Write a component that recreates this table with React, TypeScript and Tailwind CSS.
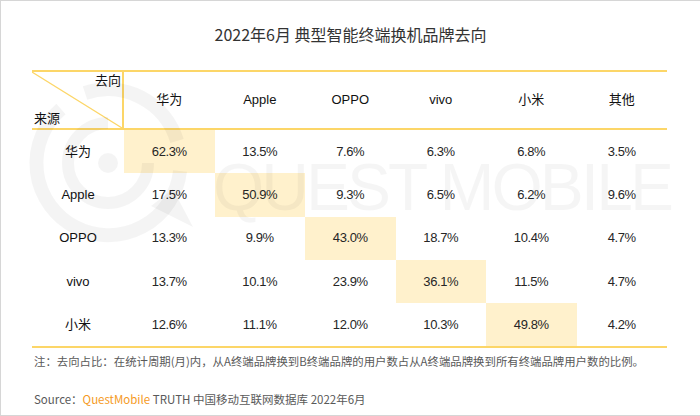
import React from "react";

const cols = ["华为", "Apple", "OPPO", "vivo", "小米", "其他"];
const rows: { name: string; vals: string[] }[] = [
  { name: "华为", vals: ["62.3%", "13.5%", "7.6%", "6.3%", "6.8%", "3.5%"] },
  { name: "Apple", vals: ["17.5%", "50.9%", "9.3%", "6.5%", "6.2%", "9.6%"] },
  { name: "OPPO", vals: ["13.3%", "9.9%", "43.0%", "18.7%", "10.4%", "4.7%"] },
  { name: "vivo", vals: ["13.7%", "10.1%", "23.9%", "36.1%", "11.5%", "4.7%"] },
  { name: "小米", vals: ["12.6%", "11.1%", "12.0%", "10.3%", "49.8%", "4.2%"] },
];

function Watermark() {
  return (
    <div className="absolute inset-0 pointer-events-none">
      <svg width="700" height="416" className="absolute left-0 top-0">
        <g fill="none" stroke="rgba(0,0,0,0.045)" strokeLinecap="butt">
          <path d="M 60 108 A 72 72 0 1 0 179 170" strokeWidth="14" />
          <path d="M 84 92 A 72 72 0 0 1 176 140" strokeWidth="14" />
          <path d="M 107 122 A 40 40 0 1 0 147 162" strokeWidth="12" />
        </g>
        <path d="M 150 205 L 192 226 L 172 188 Z" fill="rgba(0,0,0,0.045)" />
        <circle cx="107" cy="162" r="10" fill="rgba(0,0,0,0.045)" />
      </svg>
      <div
        className="absolute left-[212px] top-[153px] text-[66px] leading-none tracking-[-3px] text-[rgba(0,0,0,0.04)] whitespace-nowrap"
        style={{ fontFamily: "'Liberation Sans', Arial, sans-serif" }}
      >
        QUEST MOBILE
      </div>
    </div>
  );
}

export default function App() {
  return (
    <div
      className="relative w-[700px] h-[416px] bg-white border-t border-l border-b border-[#d6d6d6] overflow-hidden"
      style={{ fontFamily: "'Liberation Sans', 'Noto Sans CJK SC', sans-serif" }}
    >
      <div className="h-[69px] flex items-center justify-center">
        <div
          className="text-[16px] text-[#333333] pb-[4px]"
          style={{ fontFamily: "'Noto Sans CJK SC', sans-serif" }}
        >
          2022年6月 典型智能终端换机品牌去向
        </div>
      </div>

      <div className="ml-[31px] w-[635px]">
        <div className="grid grid-cols-[92px_repeat(6,1fr)] h-[60px] border-t-2 border-b-2 border-[#fcd668]">
          <div className="relative border-r-2 border-[#fcd668]">
            <svg className="absolute inset-0" width="100%" height="100%" preserveAspectRatio="none" viewBox="0 0 100 100">
              <line x1="0" y1="0" x2="100" y2="100" stroke="#fcd668" strokeWidth="1.2" vectorEffect="non-scaling-stroke" />
            </svg>
            <div className="absolute right-[1px] top-[0px] text-[13px] leading-[18px] text-[#111]">去向</div>
            <div className="absolute left-[2px] bottom-[0px] text-[13px] leading-[18px] text-[#111]">来源</div>
          </div>
          {cols.map((c) => (
            <div key={c} className="flex items-center justify-center text-[13px] text-[#111]">
              {c}
            </div>
          ))}
        </div>
        <div className="border-b-2 border-[#fcd668]">
          {rows.map((r, ri) => (
            <div key={r.name} className="grid grid-cols-[92px_repeat(6,1fr)] h-[43.3px]">
              <div className="flex items-center justify-center text-[13px] text-[#111]">{r.name}</div>
              {r.vals.map((v, ci) => (
                <div
                  key={ci}
                  className={
                    "flex items-center justify-center text-[13px] tracking-[-0.4px] text-[#262626] " +
                    (ri === ci ? "bg-[#fff1cc]" : "")
                  }
                >
                  {v}
                </div>
              ))}
            </div>
          ))}
        </div>
      </div>

      <div
        className="ml-[33px] mt-[4px] text-[11.4px] leading-[18px] text-[#595959] whitespace-nowrap"
        style={{ fontFamily: "'Noto Sans CJK SC', sans-serif" }}
      >
        注：去向占比：在统计周期(月)内，从A终端品牌换到B终端品牌的用户数占从A终端品牌换到所有终端品牌用户数的比例。
      </div>
      <div
        className="ml-[33px] mt-[20px] text-[11.5px] leading-[18px] text-[#595959] whitespace-nowrap"
        style={{ fontFamily: "'Noto Sans CJK SC', sans-serif" }}
      >
        Source：<span className="text-[#f59a1e]">QuestMobile</span> TRUTH 中国移动互联网数据库 2022年6月
      </div>

      <Watermark />
    </div>
  );
}
